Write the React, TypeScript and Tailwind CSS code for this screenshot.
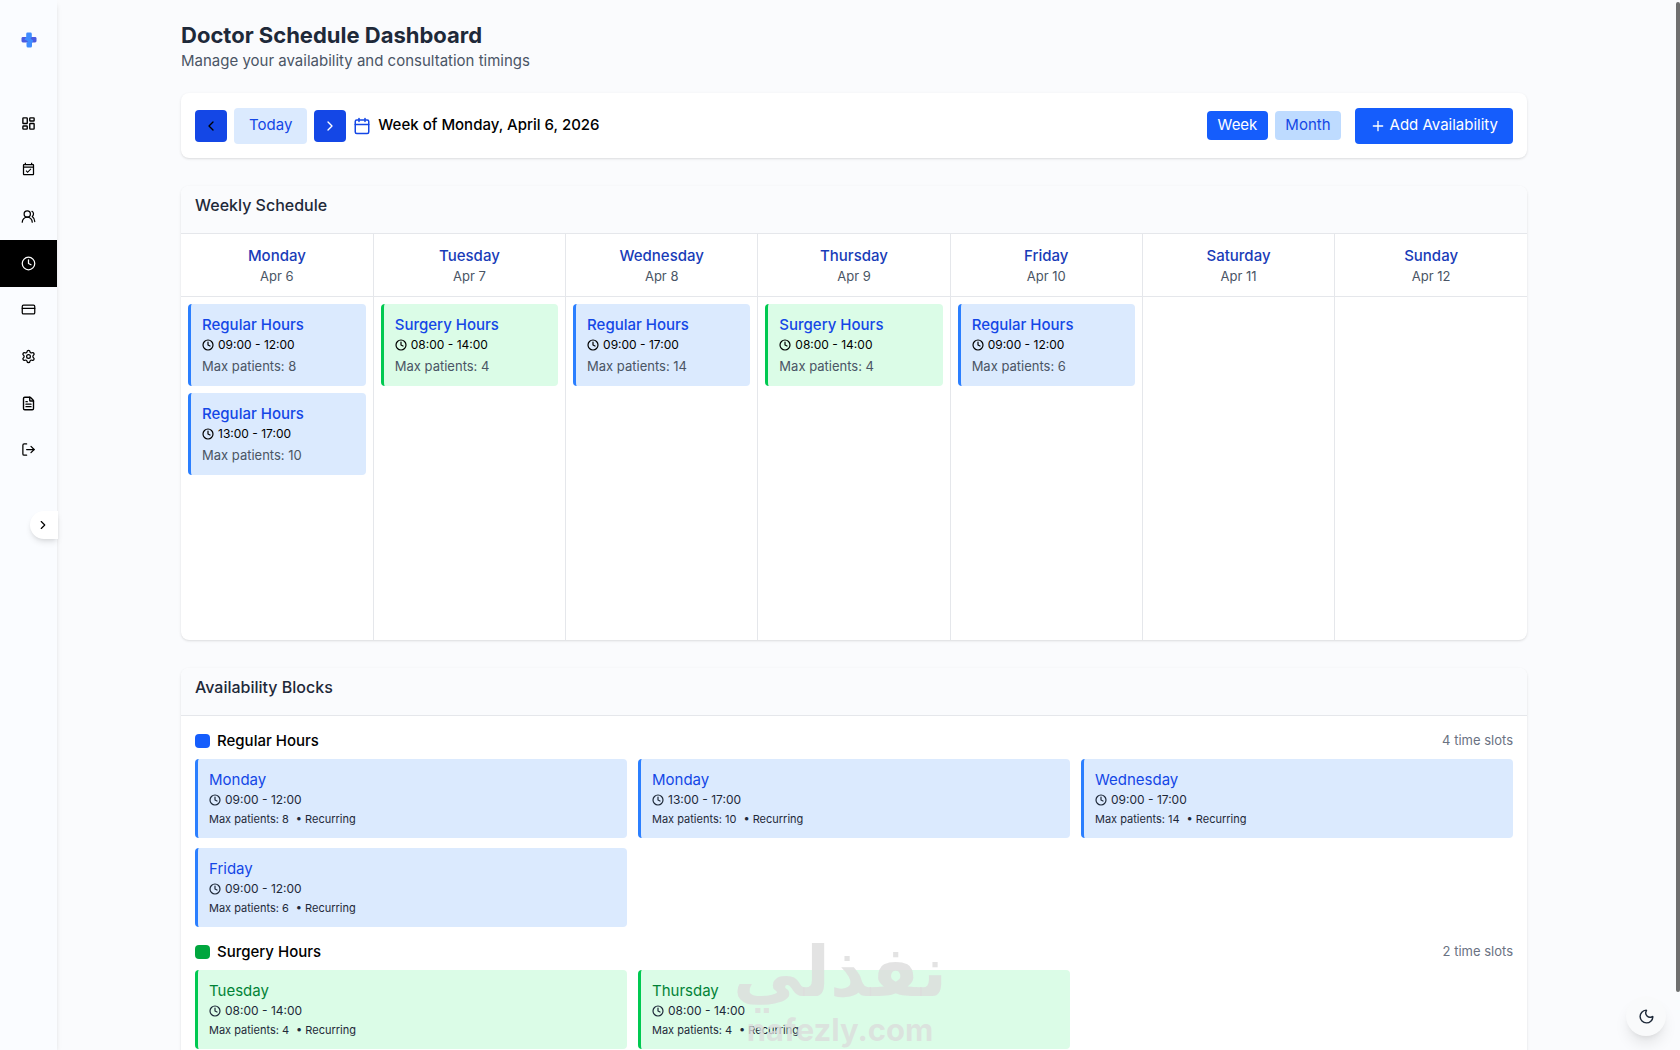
import type { ReactNode } from "react";
import {
  Calendar,
  ChevronLeft,
  ChevronRight,
  Clock,
  CreditCard,
  FileText,
  LayoutDashboard,
  LogOut,
  Moon,
  Plus,
  Settings,
  UsersRound,
} from "lucide-react";
import { MdOutlineEventAvailable } from "react-icons/md";

type SlotType = "regular" | "surgery";

interface Slot {
  day: string;
  type: SlotType;
  start: string;
  end: string;
  max: number;
}

const DAYS = [
  { name: "Monday", date: "Apr 6" },
  { name: "Tuesday", date: "Apr 7" },
  { name: "Wednesday", date: "Apr 8" },
  { name: "Thursday", date: "Apr 9" },
  { name: "Friday", date: "Apr 10" },
  { name: "Saturday", date: "Apr 11" },
  { name: "Sunday", date: "Apr 12" },
];

const SLOTS: Slot[] = [
  { day: "Monday", type: "regular", start: "09:00", end: "12:00", max: 8 },
  { day: "Monday", type: "regular", start: "13:00", end: "17:00", max: 10 },
  { day: "Tuesday", type: "surgery", start: "08:00", end: "14:00", max: 4 },
  { day: "Wednesday", type: "regular", start: "09:00", end: "17:00", max: 14 },
  { day: "Thursday", type: "surgery", start: "08:00", end: "14:00", max: 4 },
  { day: "Friday", type: "regular", start: "09:00", end: "12:00", max: 6 },
];

const TYPES = {
  regular: {
    label: "Regular Hours",
    swatch: "bg-blue-600",
    card: "bg-blue-100 border-blue-500",
    title: "text-blue-700",
  },
  surgery: {
    label: "Surgery Hours",
    swatch: "bg-green-600",
    card: "bg-green-100 border-green-500",
    title: "text-green-700",
  },
};

const NAV: { label: string; icon: ReactNode; active?: boolean }[] = [
  { label: "Dashboard", icon: <LayoutDashboard size={15} strokeWidth={2.2} /> },
  { label: "Appointments", icon: <MdOutlineEventAvailable size={15} /> },
  { label: "Patients", icon: <UsersRound size={15} /> },
  { label: "Schedule", icon: <Clock size={15} />, active: true },
  { label: "Payments", icon: <CreditCard size={15} /> },
  { label: "Settings", icon: <Settings size={15} /> },
  { label: "Reports", icon: <FileText size={15} strokeWidth={2.2} /> },
  { label: "Log out", icon: <LogOut size={15} /> },
];

function Logo() {
  return (
    <svg viewBox="0 0 16 16" className="w-4 h-4" aria-hidden="true">
      <rect x="0.5" y="5" width="15" height="5.5" rx="1.4" fill="#4a5be0" />
      <path
        d="M6.6.5h2.800a1.400 1.400 0 0 1 1.400 1.400V5L9.500 6.800l2.800 1.700-1.300 2.500v3a1.500 1.500 0 0 1-1.500 1.500H7a1.500 1.500 0 0 1-1.500-1.500V11L7 9.200 3.400 7.600 5.200 5V1.900A1.400 1.400 0 0 1 6.600.5z"
        fill="#3f8cff"
      />
    </svg>
  );
}

function Sidebar() {
  return (
    <aside className="relative w-[57px] shrink-0 bg-[#fafcff] shadow-md">
      <a href="#home" aria-label="Home" className="flex justify-center pt-8">
        <Logo />
      </a>
      <nav className="mt-[52px] grid grid-rows-8 h-[373px]">
        {NAV.map((item) => (
          <a
            key={item.label}
            href="#"
            aria-label={item.label}
            className={`flex items-center justify-center ${
              item.active ? "bg-black text-white" : "text-black"
            }`}
          >
            {item.icon}
          </a>
        ))}
      </nav>
      <button
        aria-label="Expand sidebar"
        className="absolute left-[30px] top-[511px] w-7 h-7 pr-0.5 rounded-l-full bg-white shadow-md flex items-center justify-center"
      >
        <ChevronRight size={14} />
      </button>
    </aside>
  );
}

function Toolbar() {
  return (
    <div className="mt-5 p-3.5 h-[65px] bg-white rounded-lg shadow-sm flex items-center justify-between">
      <div className="flex items-center gap-[7px]">
        <button aria-label="Previous week" className="w-8 h-8 rounded-sm bg-blue-700 text-black flex items-center justify-center">
          <ChevronLeft size={16} />
        </button>
        <button className="h-9 px-[15px] rounded-sm bg-blue-100 text-blue-700 text-[15px]">Today</button>
        <button aria-label="Next week" className="w-8 h-8 rounded-sm bg-blue-700 text-white flex items-center justify-center">
          <ChevronRight size={16} />
        </button>
        <Calendar size={18} className="text-blue-700" />
        <span className="text-[15px] font-medium text-black">Week of Monday, April 6, 2026</span>
      </div>
      <div className="flex items-center">
        <button className="h-[29px] px-[11px] rounded-sm bg-blue-600 text-white text-[15px]">Week</button>
        <button className="ml-[7px] h-[29px] px-[10px] rounded-sm bg-blue-200 text-blue-700 text-[15px]">Month</button>
        <button className="ml-3.5 h-9 px-[15px] rounded-sm bg-blue-600 text-white text-[15px] flex items-center gap-1">
          <Plus size={16} />
          Add Availability
        </button>
      </div>
    </div>
  );
}

function SlotTime({ slot }: { slot: Slot }) {
  return (
    <span className="flex items-center gap-1">
      <Clock size={12} strokeWidth={2.4} />
      {slot.start} - {slot.end}
    </span>
  );
}

function SectionTitle({ children }: { children: ReactNode }) {
  return (
    <h2 className="h-12 px-3.5 pb-[10px] flex items-center text-base font-medium text-gray-800 bg-[#fafbfd] border-b border-gray-200">
      {children}
    </h2>
  );
}

function WeeklySchedule() {
  return (
    <section className="mt-7 bg-white rounded-lg shadow-sm overflow-hidden">
      <SectionTitle>Weekly Schedule</SectionTitle>
      <table className="w-full table-fixed border-collapse">
        <thead>
          <tr>
            {DAYS.map((day) => (
              <th key={day.name} scope="col" className="h-[62px] pt-0.5 border-b border-r last:border-r-0 border-gray-200">
                <div className="text-[15px] leading-5 font-medium text-blue-800">{day.name}</div>
                <div className="text-[13px] leading-5 font-normal text-gray-600">{day.date}</div>
              </th>
            ))}
          </tr>
        </thead>
        <tbody>
          <tr>
            {DAYS.map((day) => (
              <td key={day.name} className="h-[344px] p-[7px] align-top border-r last:border-r-0 border-gray-200">
                <div className="flex flex-col gap-[7px]">
                  {SLOTS.filter((s) => s.day === day.name).map((slot) => (
                    <div key={slot.start} className={`h-[82px] px-[11px] py-[11px] rounded-sm border-l-3 ${TYPES[slot.type].card}`}>
                      <div className="text-[15px] leading-5 font-medium text-blue-700">{TYPES[slot.type].label}</div>
                      <div className="text-xs leading-5 text-black">
                        <SlotTime slot={slot} />
                      </div>
                      <div className="text-[13px] leading-[22px] text-gray-600">Max patients: {slot.max}</div>
                    </div>
                  ))}
                </div>
              </td>
            ))}
          </tr>
        </tbody>
      </table>
    </section>
  );
}

function AvailabilityGroup({ type }: { type: SlotType }) {
  const slots = SLOTS.filter((s) => s.type === type);
  return (
    <div>
      <div className="h-[22px] flex items-center justify-between">
        <h3 className="flex items-center gap-[7px] text-[15px] font-medium text-black">
          <span className={`w-[15px] h-3.5 rounded-sm ${TYPES[type].swatch}`} />
          {TYPES[type].label}
        </h3>
        <span className="text-[13px] text-gray-500">{slots.length} time slots</span>
      </div>
      <div className="mt-[7px] grid grid-cols-3 gap-x-[11px] gap-y-[10px]">
        {slots.map((slot) => (
          <div key={slot.day + slot.start} className={`h-[79px] px-[11px] py-[11px] rounded-sm border-l-3 ${TYPES[type].card}`}>
            <div className={`text-[15px] leading-5 ${TYPES[type].title}`}>{slot.day}</div>
            <div className="text-xs leading-5 text-gray-800">
              <SlotTime slot={slot} />
            </div>
            <div className="text-[11px] leading-[18px] text-gray-800 flex gap-[7px]">
              <span>Max patients: {slot.max}</span>
              <span>• Recurring</span>
            </div>
          </div>
        ))}
      </div>
    </div>
  );
}

export default function App() {
  return (
    <div className="relative h-screen overflow-hidden flex bg-[#fafbfd] font-['Inter',sans-serif]">
      <Sidebar />
      <main className="flex-1 pr-[29px]">
        <div className="max-w-[1346px] mx-auto pt-[21px]">
          <h1 className="text-[22px] leading-7 font-bold text-gray-800">Doctor Schedule Dashboard</h1>
          <p className="text-[15px] leading-6 text-gray-600">Manage your availability and consultation timings</p>
          <Toolbar />
          <WeeklySchedule />
          <section className="mt-7 bg-white rounded-lg shadow-sm overflow-hidden">
            <SectionTitle>Availability Blocks</SectionTitle>
            <div className="p-3.5 flex flex-col gap-3.5">
              <AvailabilityGroup type="regular" />
              <AvailabilityGroup type="surgery" />
            </div>
          </section>
        </div>
      </main>

      {/* Watermark */}
      <div className="absolute bottom-0 left-1/2 -translate-x-1/2 flex flex-col items-center text-[#dcdcdc]/80 font-bold pointer-events-none select-none">
        <span lang="ar" dir="rtl" className="font-['DejaVu_Sans',sans-serif] text-[70px] leading-[76px]">نفذلي</span>
        <span className="text-[31px] leading-10">nafezly.com</span>
      </div>

      <button
        aria-label="Toggle dark mode"
        className="absolute right-3.5 bottom-3.5 w-10 h-10 rounded-full bg-gray-50 shadow-lg flex items-center justify-center text-gray-800"
      >
        <Moon size={17} />
      </button>
      {/* Scroll thumb */}
      <div className="absolute right-0 top-0.5 w-1 h-[990px] rounded-full bg-[#6f6f6f]" />
    </div>
  );
}
